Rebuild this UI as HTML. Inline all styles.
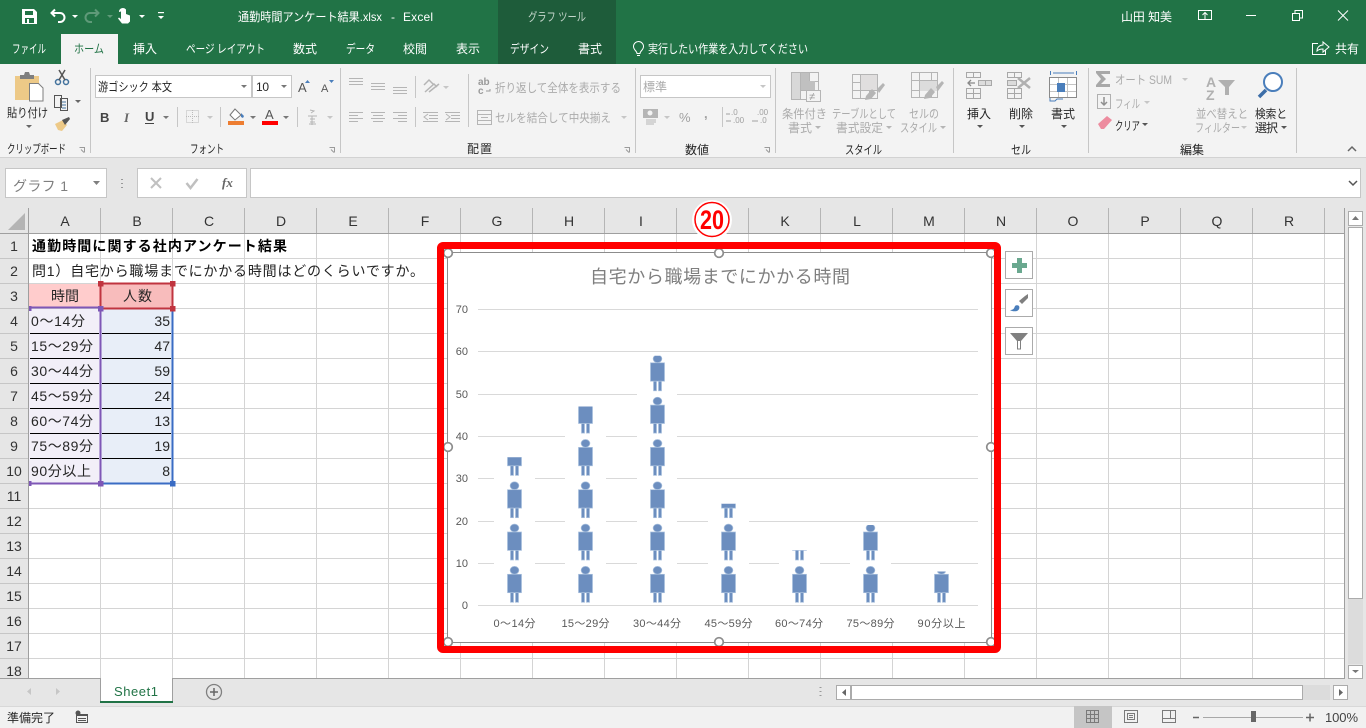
<!DOCTYPE html>
<html lang="ja"><head><meta charset="utf-8"><title>Excel</title>
<style>
html,body{margin:0;padding:0;background:#fff;overflow:hidden}
svg{display:block}
text{font-family:"Liberation Sans","Noto Sans CJK JP",sans-serif;font-size:12px;fill:#262626}
.w text,text.w{fill:#fff}
.g text,text.g{fill:#ababab}
.c text{font-size:14px}
.h text{font-size:14px;fill:#333;text-anchor:middle}
.x text{font-size:11px;fill:#595959;text-anchor:middle}
.y text{font-size:11px;fill:#595959;text-anchor:end}
</style></head><body>
<svg xmlns="http://www.w3.org/2000/svg" width="1366" height="728" viewBox="0 0 1366 728">
<defs>
<path id="a" d="M0 0h6l-3 3z"/>
<g id="p" stroke="#a9c0dd" stroke-width=".7"><ellipse cx="0" cy="-35" rx="4.400" ry="3.900"/><rect x="-7" y="-31" width="14" height="18.400"/><rect x="-4" y="-12.600" width="3" height="9.600"/><rect x="1" y="-12.600" width="3" height="9.600"/></g>
<g id="man"><use href="#p" y="0"/><use href="#p" y="-42.3"/><use href="#p" y="-84.6"/><use href="#p" y="-126.9"/><use href="#p" y="-169.2"/><use href="#p" y="-211.5"/></g>
<clipPath id="c1"><rect x="490" y="457.2" width="50" height="150"/></clipPath>
<clipPath id="c2"><rect x="560" y="406.5" width="50" height="200"/></clipPath>
<clipPath id="c3"><rect x="630" y="355.7" width="50" height="250"/></clipPath>
<clipPath id="c4"><rect x="704" y="503.8" width="50" height="102"/></clipPath>
<clipPath id="c5"><rect x="775" y="550.3" width="50" height="56"/></clipPath>
<clipPath id="c6"><rect x="846" y="525" width="50" height="81"/></clipPath>
<clipPath id="c7"><rect x="917" y="571.5" width="50" height="35"/></clipPath>
</defs>

<!-- backgrounds -->
<rect width="1366" height="64" fill="#217346"/>
<rect x="498" width="118" height="64" fill="#1e5c3a"/>
<rect y="64" width="1366" height="93" fill="#f3f3f3"/>
<rect y="157" width="1366" height="1" fill="#d2d2d2"/>
<rect y="158" width="1366" height="50" fill="#e6e6e6"/>
<rect x="61" y="34" width="57" height="30" fill="#f3f3f3"/>

<!-- title bar icons -->
<g fill="#fff">
<path fill-rule="evenodd" d="M22 9h12l3 3v12H22zM25 11v4h8v-4zM25 18v5h9v-5z"/>
<path d="M27 19h2v4h-2z"/>
<use href="#a" x="72" y="15"/><use href="#a" x="139" y="15"/><use href="#a" x="158" y="16"/>
<rect x="158" y="12" width="6" height="1.200"/>
<path d="M119 11a4 4 0 0 1 7-1.500v4.500l4 1.500v6l-2 2h-6l-4-5 1-1 2 1.500v-7.500l-2 .5z"/>
</g>
<path d="M52 13h8a4.500 4.500 0 0 1 0 9h-2M55 9.500l-3.500 3.500 3.500 3.500" fill="none" stroke="#fff" stroke-width="2"/>
<path d="M98 13h-8a4.500 4.500 0 0 0 0 9h2M95 9.500l3.500 3.500-3.500 3.500" fill="none" stroke="#5f9a79" stroke-width="2"/>
<use href="#a" x="107" y="15" fill="#5f9a79"/>
<path d="M1198.500 10.500h13v9h-13zM1202.500 15l2.500-2.500 2.500 2.500M1205 13v6" fill="none" stroke="#fff"/>
<path d="M1246 15.500h10" stroke="#fff" fill="none"/>
<path d="M1292.500 13.500h7v7h-7zM1295 13v-2.500h7.500v7.500h-3" stroke="#fff" fill="none"/>
<path d="M1338 10.500l10 10M1348 10.500l-10 10" stroke="#fff" fill="none"/>

<g class="w">
<text x="238" y="21" textLength="144" lengthAdjust="spacingAndGlyphs">通勤時間アンケート結果.xlsx</text>
<text x="391" y="21">-</text>
<text x="403" y="21" textLength="30">Excel</text>
<text x="1121" y="21" textLength="51">山田 知美</text>
<text x="12" y="53" textLength="34" lengthAdjust="spacingAndGlyphs">ファイル</text>
<text x="133" y="53" textLength="24">挿入</text>
<text x="186" y="53" textLength="79" lengthAdjust="spacingAndGlyphs">ページ レイアウト</text>
<text x="293" y="53" textLength="24">数式</text>
<text x="346" y="53" textLength="29" lengthAdjust="spacingAndGlyphs">データ</text>
<text x="403" y="53" textLength="24">校閲</text>
<text x="456" y="53" textLength="24">表示</text>
<text x="510" y="53" textLength="39" lengthAdjust="spacingAndGlyphs">デザイン</text>
<text x="578" y="53" textLength="24">書式</text>
<text x="648" y="53" textLength="160" lengthAdjust="spacingAndGlyphs">実行したい作業を入力してください</text>
<text x="1335" y="53" textLength="24">共有</text>
</g>
<text x="528" y="21" textLength="58" lengthAdjust="spacingAndGlyphs" style="fill:#c4d6cb">グラフ ツール</text>
<text x="74" y="53" textLength="30" lengthAdjust="spacingAndGlyphs" style="fill:#217346">ホーム</text>
<path d="M637 53.500c0-2.500-3.500-3.500-3.500-7a5 5 0 0 1 10 0c0 3.500-3.500 4.500-3.500 7zM637 55.500h3" fill="none" stroke="#fff"/>
<path d="M1318 43.500h-5.500v11h13v-4M1317 51c0-4 3-6 6-6v-3l6 5-6 5v-3c-2 0-4 0-6 2z" fill="none" stroke="#fff"/>

<!-- ribbon separators -->
<path d="M90.500 68v85M340.500 68v85M635.500 68v85M775.500 68v85M953.500 68v85M1088.500 68v85M1296.500 68v85M415.500 76v22M415.500 107v20M468.500 74v53M177.500 107v20M220.500 107v20M297.500 107v20M722.500 107v20" stroke="#c6c6c6" fill="none"/>

<!-- clipboard -->
<path d="M15 76h24v24H15z" fill="#edc987"/>
<path d="M20 75h4l1-3h4l1 3h4v4H20z" fill="#7f7f7f"/>
<path d="M29.500 83.500h9l4.500 4.500v13H29.500z" fill="#fff" stroke="#7f7f7f"/>
<text x="7" y="117" textLength="41" lengthAdjust="spacingAndGlyphs">貼り付け</text>
<use href="#a" x="26" y="125" fill="#666"/>
<circle cx="58" cy="82" r="2.500" fill="none" stroke="#41719c" stroke-width="1.500"/><circle cx="66" cy="82" r="2.500" fill="none" stroke="#41719c" stroke-width="1.500"/>
<path d="M59 80l6-10M65 80l-6-10" stroke="#555" stroke-width="1.500" fill="none"/>
<path d="M54.500 95.500h7v12h-7zM60.500 98.500h7v12h-7z" fill="#f3f3f3" stroke="#555"/>
<path d="M62 102h4M62 105h4M62 108h4" stroke="#41719c"/>
<use href="#a" x="75" y="100" fill="#666"/>
<path d="M55 124l8-4 4 5-5 6-4-1z" fill="#edc987"/><path d="M62 120l7-3 1 2-5 6z" fill="#555"/>
<text x="7" y="153" textLength="59" lengthAdjust="spacingAndGlyphs">クリップボード</text>
<text x="190" y="153" textLength="34" lengthAdjust="spacingAndGlyphs">フォント</text>
<text x="467" y="153" textLength="25">配置</text>
<text x="685" y="154" textLength="24">数値</text>
<text x="845" y="154" textLength="37" lengthAdjust="spacingAndGlyphs">スタイル</text>
<text x="1011" y="154" textLength="20" lengthAdjust="spacingAndGlyphs">セル</text>
<text x="1180" y="154" textLength="24">編集</text>
<g fill="none" stroke="#9a9a9a"><path d="M79.500 147.500h5v5M84 152.500l-3-3M329.500 147.500h5v5M334 152.500l-3-3"/><path d="M624.500 147.500h5v5M629 152.500l-3-3M764.500 147.500h5v5M769 152.500l-3-3"/></g>

<!-- font -->
<rect x="95.500" y="75.500" width="156" height="22" fill="#fff" stroke="#c6c6c6"/>
<rect x="252.500" y="75.500" width="39" height="22" fill="#fff" stroke="#c6c6c6"/>
<text x="98" y="91" textLength="74" lengthAdjust="spacingAndGlyphs">游ゴシック 本文</text>
<text x="256" y="91" textLength="13">10</text>
<use href="#a" x="241" y="85" fill="#777"/><use href="#a" x="281" y="85" fill="#777"/>
<text x="298" y="92" style="font-size:13px;fill:#555">A</text><text x="321" y="92" style="font-size:11px;fill:#555">A</text>
<path d="M305 83l2.500-3 2.500 3zM329 80l2.500 3 2.500-3z" fill="#4a7ebb"/>
<text x="100" y="122" style="font-size:13px;font-weight:bold;fill:#444">B</text>
<text x="124" y="122" style="font-size:13px;font-style:italic;font-weight:bold;fill:#666;font-family:'Liberation Serif',serif">I</text>
<text x="145" y="121" style="font-size:13px;font-weight:bold;fill:#444">U</text><rect x="145" y="123" width="9" height="1" fill="#444"/>
<use href="#a" x="163" y="116" fill="#777"/>
<rect x="186.500" y="110.500" width="12" height="12" fill="none" stroke="#bbb" stroke-dasharray="1 1"/>
<path d="M192.500 110v13M186 116.500h13" stroke="#bbb" stroke-dasharray="1 1"/>
<use href="#a" x="207" y="116" fill="#c6c6c6"/>
<path d="M235 109l-5 6 5 5 6-5z" fill="#fff" stroke="#777"/><path d="M241 113l3 3-1 2-2-1z" fill="#4a7ebb"/>
<rect x="228" y="121" width="16" height="4" fill="#ed7d31"/>
<use href="#a" x="250" y="116" fill="#777"/>
<text x="265" y="119" style="font-size:13px;fill:#555">A</text>
<rect x="262" y="121" width="16" height="4" fill="#f00"/>
<use href="#a" x="283" y="116" fill="#777"/>
<path d="M308 116h9M310 119h5M310 122h5M309 124h7M312 116v9M310 110l4 1-3 2" stroke="#b5b5b5" fill="none"/>
<use href="#a" x="327" y="116" fill="#c6c6c6"/>

<!-- alignment -->
<g stroke="#b5b5b5" fill="none">
<path d="M349 78.500h14M349 81.500h14M349 84.500h14M371 83.500h14M371 86.500h14M371 89.500h14M393 87.500h14M393 90.500h14M393 93.500h14"/>
<path d="M349 112.500h14M349 115.500h9M349 118.500h14M349 121.500h9M371 112.500h14M373 115.500h10M371 118.500h14M373 121.500h10M393 112.500h14M398 115.500h9M393 118.500h14M398 121.500h9"/>
<path d="M423 112.500h15M429 115.500h9M429 118.500h9M423 121.500h15M428 114l-4 3 4 3M445 112.500h15M451 115.500h9M451 118.500h9M445 121.500h15M446 114l4 3-4 3"/>
<path d="M425 92l9-8 3 3M424 85l5-5 4 4M429 92l10-8" stroke-width="1.500"/>
<path d="M477.500 110.500h14v14h-14zM478 114.500h13M478 120.500h13M481 117.500h7"/>
</g>
<use href="#a" x="443" y="86" fill="#c6c6c6"/>
<text x="478" y="85" style="font-size:10px;font-weight:bold;fill:#9a9a9a">ab</text>
<text x="478" y="94" style="font-size:10px;font-weight:bold;fill:#9a9a9a">c</text>
<path d="M490 89v2h-4" stroke="#9a9a9a" fill="none"/>
<g class="g">
<text x="495" y="92" textLength="126" lengthAdjust="spacingAndGlyphs">折り返して全体を表示する</text>
<text x="495" y="122" textLength="116" lengthAdjust="spacingAndGlyphs">セルを結合して中央揃え</text>
</g>
<use href="#a" x="621" y="116" fill="#c6c6c6"/>

<!-- number -->
<rect x="640.500" y="75.500" width="130" height="22" fill="#fff" stroke="#c6c6c6"/>
<text x="643" y="91" textLength="24" class="g">標準</text>
<use href="#a" x="760" y="85" fill="#c6c6c6"/>
<rect x="643" y="109" width="15" height="9" fill="#b5b5b5"/><circle cx="650" cy="113" r="2.500" fill="#f3f3f3"/>
<path d="M646 120h10M646 122h10M646 124h8" stroke="#b5b5b5"/>
<use href="#a" x="664" y="116" fill="#c6c6c6"/>
<text x="679" y="122" style="font-size:13px;fill:#a0a0a0">%</text>
<text x="704" y="118" style="font-size:13px;font-weight:bold;fill:#a0a0a0">,</text>
<text x="731" y="115" style="font-size:8px;fill:#a0a0a0">.0</text><text x="733" y="123" style="font-size:8px;fill:#a0a0a0">.00</text>
<text x="757" y="115" style="font-size:8px;fill:#a0a0a0">.00</text><text x="760" y="123" style="font-size:8px;fill:#a0a0a0">.0</text>
<path d="M726 114h4M726 121h5M752 121h6" stroke="#a0a0a0"/>

<!-- styles -->
<g stroke="#b5b5b5" fill="none">
<path d="M791.500 72.500h27v27h-27zM791.500 81.500h27M791.500 90.500h20M800.500 72.500v27M809.500 72.500v27"/>
<path d="M852.500 74.500h25v24h-25zM852.500 82.500h25M852.500 90.500h25M860.500 74.500v24M869.500 74.500v24"/>
<path d="M911.500 72.500h26v25h-26zM911.500 80.500h26M911.500 90.500h26M919.500 72.500v25M931.500 72.500v25"/>
</g>
<path d="M801 73h8v8h6v9h-14z" fill="#c0c0c0"/><rect x="792" y="73" width="8" height="26" fill="#d8d8d8"/>
<rect x="806.500" y="90.500" width="14" height="11" fill="#f3f3f3" stroke="#b5b5b5"/>
<text x="809" y="100" style="font-size:11px;fill:#9a9a9a">≠</text>
<rect x="861" y="75" width="16" height="15" fill="#e0dede"/>
<rect x="920" y="81" width="17" height="10" fill="#dcdcdc"/>
<path d="M877 89l6-6 2 2-6 8zM866 96l6-7 4 4-5 6-6 1z" fill="#b5b5b5"/>
<path d="M936 87l6-6 2 2-6 8zM925 95l6-7 4 4-5 6-6 1z" fill="#b5b5b5"/>
<g class="g">
<text x="782" y="118" textLength="45" lengthAdjust="spacingAndGlyphs">条件付き</text><text x="788" y="132" textLength="24">書式</text>
<text x="832" y="118" textLength="64" lengthAdjust="spacingAndGlyphs">テーブルとして</text><text x="836" y="132" textLength="47" lengthAdjust="spacingAndGlyphs">書式設定</text>
<text x="909" y="118" textLength="30" lengthAdjust="spacingAndGlyphs">セルの</text><text x="900" y="132" textLength="37" lengthAdjust="spacingAndGlyphs">スタイル</text>
</g>
<use href="#a" x="815" y="126" fill="#b5b5b5"/><use href="#a" x="886" y="126" fill="#b5b5b5"/><use href="#a" x="940" y="126" fill="#b5b5b5"/>

<!-- cells -->
<g stroke="#a8a8a8" fill="none">
<path d="M966.500 72.500h14v5h-14zM973.500 72.500v5M966.500 88.500h14v10h-14zM966.500 93.500h14M973.500 88.500v10"/>
<path d="M978.500 80.500h13v5h-13zM985.500 80.500v5" fill="#dcdcdc"/>
<path d="M1007.500 72.500h14v5h-14zM1014.500 72.500v5M1007.500 88.500h14v10h-14zM1007.500 93.500h14M1014.500 88.500v10"/>
<path d="M1007.500 80.500h9v5h-9z" fill="#dcdcdc"/>
</g>
<path d="M975 83h-7m3-3l-3 3 3 3" stroke="#888" fill="none" stroke-width="1.300"/>
<path d="M1018 78l12 10M1030 78l-12 10" stroke="#b0b0b0" stroke-width="2.500" fill="none"/>
<g fill="#fff" stroke="#8a8a8a"><rect x="1049.500" y="77.500" width="27" height="20"/></g>
<path d="M1058.500 78v19M1067.500 78v19M1050 84.500h26M1050 91.500h26" stroke="#c4c4c4" fill="none"/>
<rect x="1057" y="83" width="8" height="9" fill="#4a7ebb"/>
<path d="M1050 98v3h5l2-2h6M1050.500 71v4M1076.500 71v4M1053 73h21" stroke="#4a7ebb" fill="none"/>
<path d="M1050 97.500h27" stroke="#8a8a8a"/>
<text x="967" y="118" textLength="24">挿入</text>
<text x="1009" y="118" textLength="24">削除</text>
<text x="1051" y="118" textLength="24">書式</text>
<use href="#a" x="977" y="125" fill="#555"/><use href="#a" x="1019" y="125" fill="#555"/><use href="#a" x="1061" y="125" fill="#555"/>

<!-- editing -->
<path d="M1096 71h14v3h-9l5 5-5 5h9v3h-14v-2l5-6-5-6z" fill="#a8a8a8"/>
<text x="1115" y="84" textLength="57" class="g" lengthAdjust="spacingAndGlyphs">オート SUM</text>
<use href="#a" x="1182" y="78" fill="#c6c6c6"/>
<rect x="1097.500" y="94.500" width="13" height="14" fill="none" stroke="#b0b0b0"/>
<path d="M1104 97v8m-3-3l3 3 3-3" stroke="#909090" stroke-width="1.500" fill="none"/>
<text x="1115" y="108" textLength="25" class="g" lengthAdjust="spacingAndGlyphs">フィル</text>
<use href="#a" x="1144" y="101" fill="#c6c6c6"/>
<path d="M1098 124l9-8 5 4-8 9h-3z" fill="#ed8c9f"/>
<text x="1115" y="130" textLength="25" lengthAdjust="spacingAndGlyphs">クリア</text>
<use href="#a" x="1142" y="123" fill="#555"/>
<text x="1206" y="87" style="font-size:14px;font-weight:bold;fill:#b0b0b0">A</text>
<text x="1206" y="100" style="font-size:14px;font-weight:bold;fill:#b0b0b0">Z</text>
<path d="M1218 80h17l-6 7v8h-4v-8z" fill="#b0b0b0"/>
<g class="g"><text x="1196" y="118" textLength="52" lengthAdjust="spacingAndGlyphs">並べ替えと</text><text x="1195" y="132" textLength="45" lengthAdjust="spacingAndGlyphs">フィルター</text></g>
<use href="#a" x="1241" y="126" fill="#c6c6c6"/>
<circle cx="1273" cy="82" r="9" fill="#fff" stroke="#4a7ebb" stroke-width="2"/>
<path d="M1266 90l-7 7" stroke="#3c6ea8" stroke-width="3.500" fill="none"/>
<text x="1255" y="118" textLength="32" lengthAdjust="spacingAndGlyphs">検索と</text>
<text x="1255" y="132" textLength="23">選択</text>
<use href="#a" x="1281" y="126" fill="#555"/>
<path d="M1348 151l4-4 4 4" stroke="#666" stroke-width="1.500" fill="none"/>

<!-- formula bar -->
<rect x="5.500" y="168.500" width="101" height="29" fill="#fff" stroke="#c6c6c6"/>
<rect x="137.500" y="168.500" width="109" height="29" fill="#fff" stroke="#c6c6c6"/>
<rect x="250.500" y="168.500" width="1110" height="29" fill="#fff" stroke="#c6c6c6"/>
<text x="13" y="191" textLength="55" style="font-size:14px;fill:#7f7f7f">グラフ 1</text>
<path d="M93 181h7l-3.500 4z" fill="#7f7f7f"/>
<path d="M122 179v1M122 183v1M122 187v1" stroke="#999" stroke-width="2"/>
<path d="M151 178l10 10M161 178l-10 10" stroke="#c0c0c0" stroke-width="2" fill="none"/>
<path d="M186.500 183l4 5 7-9" stroke="#c0c0c0" stroke-width="2.500" fill="none"/>
<text x="222" y="187" style="font-family:'Liberation Serif',serif;font-size:13px;font-style:italic;font-weight:bold;fill:#666">fx</text>
<path d="M1349 181l4 4 4-4" stroke="#555" stroke-width="1.500" fill="none"/>

<!-- sheet -->
<rect x="0" y="208" width="1345" height="26" fill="#e6e6e6"/>
<rect x="0" y="234" width="29" height="444" fill="#e6e6e6"/>
<rect x="29" y="234" width="1316" height="444" fill="#fff"/>
<path d="M25 213v17H8z" fill="#b4b4b4"/>
<path fill="none" stroke="#d4d4d4" d="M100.500 234V678M172.500 234V678M244.500 234V678M316.500 234V678M388.500 234V678M460.500 234V678M532.500 234V678M604.500 234V678M676.500 234V678M748.500 234V678M820.500 234V678M892.500 234V678M964.500 234V678M1036.500 234V678M1108.500 234V678M1180.500 234V678M1252.500 234V678M1324.500 234V678M29 258.500H1344M29 283.500H1344M29 308.500H1344M29 333.500H1344M29 358.500H1344M29 383.500H1344M29 408.500H1344M29 433.500H1344M29 458.500H1344M29 483.500H1344M29 508.500H1344M29 533.500H1344M29 558.500H1344M29 583.500H1344M29 608.500H1344M29 633.500H1344M29 658.500H1344"/>
<path fill="none" stroke="#b5b5b5" d="M100.500 208V233M172.500 208V233M244.500 208V233M316.500 208V233M388.500 208V233M460.500 208V233M532.500 208V233M604.500 208V233M676.500 208V233M748.500 208V233M820.500 208V233M892.500 208V233M964.500 208V233M1036.500 208V233M1108.500 208V233M1180.500 208V233M1252.500 208V233M1324.500 208V233"/>
<path fill="none" stroke="#c6c6c6" d="M0 258.500H28M0 283.500H28M0 308.500H28M0 333.500H28M0 358.500H28M0 383.500H28M0 408.500H28M0 433.500H28M0 458.500H28M0 483.500H28M0 508.500H28M0 533.500H28M0 558.500H28M0 583.500H28M0 608.500H28M0 633.500H28M0 658.500H28"/>
<path fill="none" stroke="#9f9f9f" d="M28.500 208V678M0 233.500H1344M1344.500 208V678"/>
<g class="h">
<text x="65" y="226">A</text><text x="137" y="226">B</text><text x="209" y="226">C</text><text x="281" y="226">D</text><text x="353" y="226">E</text><text x="425" y="226">F</text><text x="497" y="226">G</text><text x="569" y="226">H</text><text x="641" y="226">I</text><text x="785" y="226">K</text><text x="857" y="226">L</text><text x="929" y="226">M</text><text x="1001" y="226">N</text><text x="1073" y="226">O</text><text x="1145" y="226">P</text><text x="1217" y="226">Q</text><text x="1289" y="226">R</text>
<text x="14" y="251">1</text><text x="14" y="276">2</text><text x="14" y="301">3</text><text x="14" y="326">4</text><text x="14" y="351">5</text><text x="14" y="376">6</text><text x="14" y="401">7</text><text x="14" y="426">8</text><text x="14" y="451">9</text><text x="14" y="476">10</text><text x="14" y="501">11</text><text x="14" y="526">12</text><text x="14" y="551">13</text><text x="14" y="576">14</text><text x="14" y="601">15</text><text x="14" y="626">16</text><text x="14" y="651">17</text><text x="14" y="676">18</text>
</g>

<!-- table -->
<rect x="29" y="284" width="71" height="24" fill="#ffcccc"/>
<rect x="101" y="284" width="71" height="24" fill="#f8bcbc"/>
<rect x="29" y="309" width="71" height="174" fill="#f2eff8"/>
<rect x="101" y="309" width="71" height="174" fill="#e8eef8"/>
<path d="M30 333.500H99M30 358.500H99M30 383.500H99M30 408.500H99M30 433.500H99M30 458.500H99M102 333.500H171M102 358.500H171M102 383.500H171M102 408.500H171M102 433.500H171M102 458.500H171" stroke="#000" fill="none"/>
<path d="M29 307.500H100.500M100.500 308V483.500M29 483.500H100.500" stroke="#7e57b6" stroke-width="2" fill="none"/>
<path d="M172.500 308V483.500M100.500 483.500H172.500" stroke="#3a6cc4" stroke-width="2" fill="none"/>
<rect x="100.500" y="283.500" width="72" height="25" fill="none" stroke="#c0343f" stroke-width="2"/>
<g fill="#7e57b6"><rect x="29" y="306" width="2.500" height="5"/><rect x="29" y="481" width="2.500" height="5"/><rect x="98" y="481" width="5.500" height="5.500"/><rect x="98" y="306" width="5.500" height="5.500"/></g>
<rect x="170" y="481" width="5.500" height="5.500" fill="#3a6cc4"/>
<g fill="#c0343f"><rect x="98" y="281" width="5.500" height="5.500"/><rect x="170" y="281" width="5.500" height="5.500"/><rect x="170" y="306" width="5.500" height="5.500"/></g>
<g class="c">
<text x="32" y="251" textLength="255" style="font-weight:bold;fill:#000">通勤時間に関する社内アンケート結果</text>
<text x="32" y="276" textLength="392" style="fill:#222">問1）自宅から職場までにかかる時間はどのくらいですか。</text>
<text x="51" y="301" textLength="28">時間</text><text x="123" y="301" textLength="29">人数</text>
<text x="31" y="326" textLength="54">0〜14分</text>
<text x="31" y="351" textLength="62">15〜29分</text>
<text x="31" y="376" textLength="62">30〜44分</text>
<text x="31" y="401" textLength="62">45〜59分</text>
<text x="31" y="426" textLength="62">60〜74分</text>
<text x="31" y="451" textLength="62">75〜89分</text>
<text x="31" y="476" textLength="60">90分以上</text>
<text x="170" y="326" text-anchor="end">35</text><text x="170" y="351" text-anchor="end">47</text><text x="170" y="376" text-anchor="end">59</text><text x="170" y="401" text-anchor="end">24</text><text x="170" y="426" text-anchor="end">13</text><text x="170" y="451" text-anchor="end">19</text><text x="170" y="476" text-anchor="end">8</text>
</g>

<!-- chart -->
<rect x="447.500" y="252.500" width="544" height="390" fill="#fff" stroke="#8c8c8c"/>
<text x="720" y="283" text-anchor="middle" textLength="260" style="font-size:18px;fill:#7f7f7f">自宅から職場までにかかる時間</text>
<path d="M478 309.500H978M478 351.500H978M478 394.500H978M478 436.500H978M478 478.500H978M478 521.500H978M478 563.500H978" stroke="#d9d9d9" fill="none"/>
<g fill="#fff">
<rect x="494" y="457" width="41" height="148"/><rect x="565" y="406" width="41" height="199"/><rect x="637" y="355" width="40" height="250"/><rect x="708" y="503" width="41" height="102"/><rect x="779" y="550" width="41" height="55"/><rect x="850" y="525" width="41" height="80"/><rect x="921" y="571" width="41" height="34"/>
</g>
<path d="M478 605.500H978" stroke="#d9d9d9" fill="none"/>
<g fill="#6c8ebf">
<g clip-path="url(#c1)"><use href="#man" x="514.500" y="605.300"/></g>
<g clip-path="url(#c2)"><use href="#man" x="585.500" y="605.300"/></g>
<g clip-path="url(#c3)"><use href="#man" x="657.500" y="605.300"/></g>
<g clip-path="url(#c4)"><use href="#man" x="728.500" y="605.300"/></g>
<g clip-path="url(#c5)"><use href="#man" x="799.500" y="605.300"/></g>
<g clip-path="url(#c6)"><use href="#man" x="870.500" y="605.300"/></g>
<g clip-path="url(#c7)"><use href="#man" x="941.500" y="605.300"/></g>
</g>
<g class="y">
<text x="468" y="313">70</text><text x="468" y="355">60</text><text x="468" y="398">50</text><text x="468" y="440">40</text><text x="468" y="482">30</text><text x="468" y="525">20</text><text x="468" y="567">10</text><text x="468" y="609">0</text>
</g>
<g class="x">
<text x="514.500" y="627" textLength="42">0〜14分</text>
<text x="585.500" y="627" textLength="48">15〜29分</text>
<text x="657" y="627" textLength="48">30〜44分</text>
<text x="728.500" y="627" textLength="48">45〜59分</text>
<text x="799" y="627" textLength="48">60〜74分</text>
<text x="870.500" y="627" textLength="48">75〜89分</text>
<text x="941.500" y="627" textLength="48">90分以上</text>
</g>
<g fill="#fff" stroke="#8c8c8c" stroke-width="1.700">
<circle cx="448" cy="253" r="4.300"/><circle cx="719" cy="253" r="4.300"/><circle cx="991" cy="253" r="4.300"/><circle cx="448" cy="447" r="4.300"/><circle cx="991" cy="447" r="4.300"/><circle cx="448" cy="642" r="4.300"/><circle cx="719" cy="642" r="4.300"/><circle cx="991" cy="642" r="4.300"/>
</g>
<rect x="440.500" y="245.500" width="557" height="404" rx="2.500" fill="none" stroke="#f00" stroke-width="7"/>

<!-- side buttons -->
<g fill="#fff" stroke="#ababab"><rect x="1005.500" y="251.500" width="27" height="27"/><rect x="1005.500" y="289.500" width="27" height="27"/><rect x="1005.500" y="327.500" width="27" height="27"/></g>
<path d="M1017 258h5v5h5v5h-5v5h-5v-5h-5v-5h5z" fill="#6aa88f"/>
<path d="M1028 294v4l-6 6-3-3 6-5z" fill="#7f7f7f"/>
<path d="M1010 310c3 0 4-1 5-4 1-1 3-1 4 0 1 2 0 4-2 5-2 .5-5 .5-7-1z" fill="#4a7ebb"/>
<path d="M1010 333h18l-7 8h-4z" fill="#808080"/>
<path d="M1017.500 341v8h3v-8" fill="none" stroke="#808080"/>

<!-- 20 badge -->
<circle cx="712" cy="220" r="20" fill="#fff" opacity=".95"/>
<circle cx="712" cy="219.500" r="17" fill="#fff" stroke="#f00" stroke-width="1.500"/>
<text x="712" y="229" text-anchor="middle" textLength="24" lengthAdjust="spacingAndGlyphs" style="font-size:27px;font-weight:bold;fill:#f00">20</text>

<!-- vertical scrollbar -->
<rect x="1345" y="208" width="21" height="471" fill="#e6e6e6"/>
<rect x="1348.500" y="211.500" width="14" height="14" fill="#fff" stroke="#ababab"/>
<path d="M1352 220l3.500-4 3.500 4z" fill="#777"/>
<rect x="1348.500" y="227.500" width="14" height="371" fill="#fff" stroke="#ababab"/>
<rect x="1348" y="599" width="15" height="65" fill="#dcdcdc"/>
<rect x="1348.500" y="665.500" width="14" height="13" fill="#fff" stroke="#ababab"/>
<path d="M1352 670h7l-3.500 3z" fill="#777"/>

<!-- tabs -->
<rect x="0" y="679" width="1366" height="27" fill="#e6e6e6"/>
<path d="M0 678.500H1345" stroke="#9f9f9f"/>
<rect x="100.500" y="678" width="72" height="24" fill="#fff"/>
<path d="M100.500 678v24M172.500 678v24" stroke="#9f9f9f" fill="none"/>
<rect x="100" y="701" width="73" height="2" fill="#217346"/>
<text x="114" y="696" textLength="44" style="font-size:13px;fill:#217346">Sheet1</text>
<path d="M31 688l-4 3.500 4 3.500zM56 688l4 3.500-4 3.500z" fill="#c6c6c6"/>
<circle cx="214" cy="692" r="7.500" fill="none" stroke="#808080" stroke-width="1.300"/>
<path d="M210 692h8M214 688v8" stroke="#666" stroke-width="1.500"/>
<path d="M820.500 687v1M820.500 691v1M820.500 695v1" stroke="#999" stroke-width="2"/>
<rect x="836.500" y="685.500" width="14" height="14" fill="#fff" stroke="#ababab"/>
<path d="M846 689l-4 3.500 4 3.500z" fill="#666"/>
<rect x="851.500" y="685.500" width="451" height="14" fill="#fff" stroke="#ababab"/>
<rect x="1303" y="685" width="27" height="15" fill="#dcdcdc"/>
<rect x="1333.500" y="685.500" width="14" height="14" fill="#fff" stroke="#ababab"/>
<path d="M1339 689l4 3.500-4 3.500z" fill="#666"/>

<!-- status -->
<rect x="0" y="706" width="1366" height="22" fill="#f1f1f1"/>
<rect x="0" y="706" width="1366" height="1" fill="#d8d8d8"/>
<text x="7" y="722" textLength="48">準備完了</text>
<circle cx="78" cy="713" r="2.500" fill="#555"/>
<rect x="76" y="714" width="12" height="2" fill="#555"/>
<path d="M76.500 715.500h11v7h-11zM78 718.500h8M78 720.500h8" fill="none" stroke="#555"/>
<rect x="1074" y="706" width="38" height="22" fill="#c5c5c5"/>
<path d="M1086.500 710.500h12v12h-12zM1086.500 714.500h12M1086.500 718.500h12M1090.500 710.500v12M1094.500 710.500v12" fill="none" stroke="#7a7a7a"/>
<path d="M1124.500 710.500h13v12h-13zM1127.500 713.500h7v6h-7zM1129 715.500h4M1129 717.500h4" fill="none" stroke="#7a7a7a"/>
<path d="M1162.500 710.500h13v12h-13zM1162.500 718.500h8v-8M1170.500 718.500h5" fill="none" stroke="#7a7a7a"/>
<path d="M1193 717.500h6M1306 717.500h8M1310 713.500v8" stroke="#666" stroke-width="1.500" fill="none"/>
<path d="M1203 717.500h100" stroke="#a8a8a8"/>
<rect x="1251" y="711" width="5" height="11" fill="#666"/>
<text x="1325" y="722" textLength="33" style="font-size:13px;fill:#444">100%</text>
</svg>
</body></html>
